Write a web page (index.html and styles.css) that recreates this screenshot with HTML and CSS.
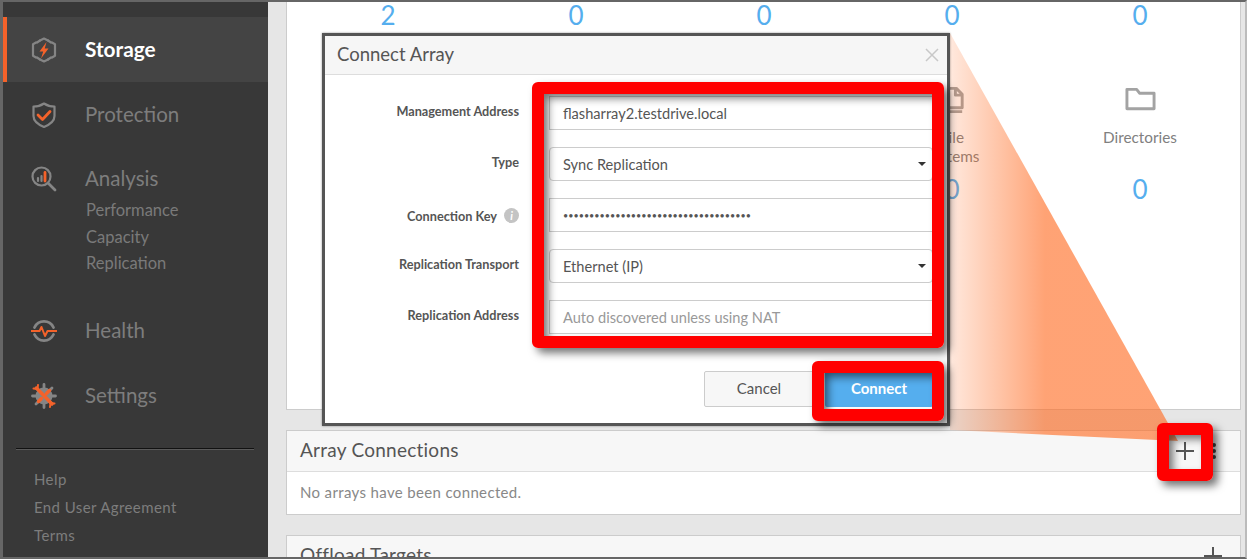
FILE: index.html
```html
<!DOCTYPE html>
<html lang="en">
<head>
<meta charset="utf-8">
<title>Connect Array</title>
<link rel="stylesheet" href="styles.css">
</head>
<body>
<div class="page">
  <div class="frame">
    <aside class="sidebar">
      <nav class="nav">
        <div class="nav-item active">
          <svg class="nav-icon" viewBox="0 0 26 26"><path class="g" d="M9 3.500L13 1.500l4 2M21 5.500l3 1.800v11.400l-3 1.800M17 22.500l-4 2-4-2M5 20.500l-3-1.800V7.300l3-1.800"/><path class="g" d="M6 5.500L9 3.500M20 5.500L17 3.500M6 20.500L9 22.500M20 20.500L17 22.500"/><path class="of" d="M15.500 5L8.500 14.500h3.700L10 21.500l7.500-10h-3.800z"/></svg>
          <span>Storage</span>
        </div>
        <div class="nav-item">
          <svg class="nav-icon" viewBox="0 0 26 26"><path class="g" d="M13 1.500c3 2 6.500 3 10.500 3V14c0 5-4.500 8.500-10.500 11C7 22.500 2.500 19 2.500 14V4.500c4 0 7.500-1 10.500-3z"/><path class="o wide" d="M7 13l4.500 4.500L19 9.500"/></svg>
          <span>Protection</span>
        </div>
        <div class="nav-group">
          <div class="nav-item nav-head">
            <svg class="nav-icon" viewBox="0 0 26 26"><circle class="g" cx="10.500" cy="10.500" r="9"/><path class="g heavy" d="M17.500 17.500l6.500 6.500"/><path class="g" d="M7 12v3M10.500 10v5"/><path class="o wide" d="M14 6.500V15"/></svg>
            <span>Analysis</span>
          </div>
          <a class="sub">Performance</a>
          <a class="sub">Capacity</a>
          <a class="sub">Replication</a>
        </div>
        <div class="nav-item">
          <svg class="nav-icon" viewBox="0 0 26 26"><path class="g heavy" d="M3.500 9.500a10.500 10.500 0 0 1 19 0M22.500 16.500a10.500 10.500 0 0 1-19 0"/><path class="o" d="M0.500 13h8l2-4 3.500 9 2.500-5h9"/></svg>
          <span>Health</span>
        </div>
        <div class="nav-item">
          <svg class="nav-icon" viewBox="0 0 26 26"><circle class="gear" cx="13" cy="13" r="8.500"/><path class="g heavy" d="M13 1.500v4M13 20.500v4M1.500 13h4M20.500 13h4M5 5l2.500 2.500M18.500 18.500L21 21M21 5l-2.500 2.500M7.500 18.500L5 21"/><path class="o wrench" d="M5.500 5l15.500 16M18.500 7.500l-3 3M10.500 15.500l-3 3"/><path class="o" d="M2.500 5.500l4 .5.500-4M23.500 20.500l-4-.5-.5 4"/></svg>
          <span>Settings</span>
        </div>
      </nav>
      <div class="divider"></div>
      <div class="links">
        <a>Help</a>
        <a>End User Agreement</a>
        <a>Terms</a>
      </div>
    </aside>
    <main class="main">
      <section class="card">
        <div class="stats">
          <div class="num">2</div><div class="num">0</div><div class="num">0</div><div class="num">0</div><div class="num">0</div>
        </div>
        <div class="stats details">
          <div class="cell"></div>
          <div class="cell"></div>
          <div class="cell"></div>
          <div class="cell">
            <svg class="stat-icon" viewBox="0 0 32 28"><path d="M9 2h11l6 6v14H9zM19 2v7h7M6 26h20"/></svg>
            <div class="label">File<br>Systems</div>
            <div class="num">0</div>
          </div>
          <div class="cell">
            <svg class="stat-icon" viewBox="0 0 32 28"><path d="M2 3h10l3 4h15v16H2z"/></svg>
            <div class="label">Directories</div>
            <div class="num">0</div>
          </div>
        </div>
      </section>
      <section class="panel">
        <header class="panel-head">
          <h2>Array Connections</h2>
          <div class="actions">
            <svg class="plus" viewBox="0 0 20 20"><path d="M10 1v18M1 10h18"/></svg>
            <span class="dots"><i></i><i></i><i></i></span>
          </div>
        </header>
        <p class="panel-body">No arrays have been connected.</p>
      </section>
      <section class="panel">
        <header class="panel-head">
          <h2>Offload Targets</h2>
          <div class="actions">
            <svg class="plus" viewBox="0 0 20 20"><path d="M10 1v18M1 10h18"/></svg>
          </div>
        </header>
      </section>
    </main>
  </div>

  <svg class="wedge" viewBox="0 0 1247 560">
    <defs>
      <linearGradient id="wedgeFill" gradientUnits="userSpaceOnUse" x1="950" y1="0" x2="1045" y2="0">
        <stop offset="0" stop-color="#ff6a20" stop-opacity="0.15"/>
        <stop offset="1" stop-color="#ff6a20" stop-opacity="0.62"/>
      </linearGradient>
    </defs>
    <polygon points="950,33 1178,441 950,430" fill="url(#wedgeFill)"/>
  </svg>

  <div class="modal">
    <header class="modal-head">
      <h3>Connect Array</h3>
      <svg class="close" viewBox="0 0 14 14"><path d="M1 1l12 12M13 1L1 13"/></svg>
    </header>
    <div class="form">
      <div class="row">
        <div class="row-label">Management Address</div>
        <div class="field square">flasharray2.testdrive.local</div>
      </div>
      <div class="row">
        <div class="row-label">Type</div>
        <div class="field select">Sync Replication<i class="caret"></i></div>
      </div>
      <div class="row">
        <div class="row-label key">Connection Key <span class="info">i</span></div>
        <div class="field square dots-text">••••••••••••••••••••••••••••••••••••</div>
      </div>
      <div class="row">
        <div class="row-label">Replication Transport</div>
        <div class="field select">Ethernet (IP)<i class="caret"></i></div>
      </div>
      <div class="row">
        <div class="row-label">Replication Address</div>
        <div class="field square placeholder">Auto discovered unless using NAT</div>
      </div>
    </div>
    <footer class="modal-foot">
      <button class="btn cancel">Cancel</button>
      <button class="btn connect">Connect</button>
    </footer>
  </div>

  <div class="mark mark-form"></div>
  <div class="mark mark-connect"></div>
  <div class="mark mark-plus"></div>
</div>
</body>
</html>
```

FILE: styles.css
```css
* { box-sizing: border-box; }
html, body { margin: 0; padding: 0; background: #fff; overflow: hidden; }
body { font-family: "Lato", "Open Sans", sans-serif; color: #555; }
.page { position: relative; width: 1247px; height: 560px; overflow: hidden; }
.frame {
  display: flex;
  width: 1247px;
  height: 559px;
  border-style: solid;
  border-color: #666;
  border-width: 2px 2px 2px 3px;
  border-right-color: #bbb;
  overflow: hidden;
}

/* sidebar */
.sidebar { width: 265px; flex: none; background: #383838; padding-top: 15px; color: #7d7d7d; }
.nav { display: flex; flex-direction: column; }
.nav-item { display: flex; align-items: center; gap: 28px; height: 65px; padding-left: 28px; font-size: 20.500px; }
.nav-item span { margin-top: -2px; }
.nav-item.active { background: #444; border-left: 4px solid #f4622a; padding-left: 24px; color: #fff; font-weight: 700; font-size: 20.800px; }
.nav-head { height: 34px; margin-top: 15px; }
.nav-group { display: flex; flex-direction: column; margin-bottom: 23px; }
.nav-icon { width: 26px; height: 26px; flex: none; fill: none; }
.nav-icon .g { stroke: #858585; stroke-width: 2.200; fill: none; stroke-linecap: round; stroke-linejoin: round; }
.nav-icon .heavy { stroke-width: 2.800; }
.nav-icon .o { stroke: #f4622a; stroke-width: 2; fill: none; stroke-linecap: round; stroke-linejoin: round; }
.nav-icon .wide { stroke-width: 2.800; }
.nav-icon .wrench { stroke-width: 3.400; }
.nav-icon .of { fill: #f4622a; }
.nav-icon .gear { fill: #858585; }
.sub { display: block; height: 26.500px; line-height: 29.500px; padding-left: 83px; font-size: 16.500px; color: #7a7a7a; }
.divider { margin: 19px 14px 0 13px; height: 2px; background: #111; border-bottom: 1px solid #5a5a5a; }
.links { display: flex; flex-direction: column; padding: 15px 0 0 31px; font-size: 15px; letter-spacing: .4px; color: #7d7d7d; }
.links a { line-height: 28.300px; }

/* main */
.main { flex: 1; min-width: 0; background: #e6e6e6; padding: 0 4px 0 18px; }
.card { height: 408px; background: #fff; border: 1px solid #ccc; border-top: 0; padding: 0 0 0 7px; }
.stats { display: grid; grid-template-columns: repeat(5, 188px); }
.details { margin-top: 58px; }
.num { text-align: center; font-size: 26px; line-height: 26px; color: #55aeee; }
.cell { display: flex; flex-direction: column; align-items: center; }
.stat-icon { width: 31px; height: 28px; fill: none; stroke: #a3a3a3; stroke-width: 3; stroke-linejoin: round; }
.label { height: 38px; margin: 14px 0 10px; text-align: center; font-size: 15.300px; line-height: 19px; color: #808080; }
.panel { margin-top: 20px; background: #fff; border: 1px solid #ccc; }
.panel-head { display: flex; align-items: center; justify-content: space-between; height: 41px; padding: 0 17px 0 13px; background: #f7f7f7; border-bottom: 1px solid #ddd; }
.panel-head h2 { margin: -4px 0 0; font-size: 19px; letter-spacing: .25px; font-weight: 400; color: #555; }
.panel-body { margin: 0; height: 42px; padding-left: 13px; line-height: 40px; font-size: 15px; letter-spacing: .35px; color: #888; }
.actions { display: flex; align-items: center; gap: 17px; margin-right: 7px; }
.panel + .panel .actions { margin-right: 0; }
.plus { width: 20px; height: 20px; fill: none; stroke: #555; stroke-width: 2; }
.dots { display: flex; flex-direction: column; gap: 2px; }
.dots i { width: 4px; height: 4px; border-radius: 50%; background: #444; }

/* overlays */
.wedge { position: absolute; left: 0; top: 0; width: 1247px; height: 560px; }
.modal { position: absolute; left: 322px; top: 33px; width: 628px; height: 393px; background: #fff; border: 3px solid #555; box-shadow: 0 0 2px rgba(0,0,0,.4); }
.modal-head { display: flex; align-items: center; justify-content: space-between; height: 39px; padding: 0 8px 0 12px; background: #f6f6f6; border-bottom: 1px solid #ddd; }
.modal-head h3 { margin: -2px 0 0; font-size: 18.500px; font-weight: 400; color: #555; }
.close { width: 14px; height: 14px; fill: none; stroke: #c8c8c8; stroke-width: 1.500; }
.form { display: flex; flex-direction: column; gap: 17px; padding: 21px 14px 0 0; }
.row { display: flex; gap: 30px; }
.row-label { width: 194px; flex: none; padding-top: 7px; text-align: right; font-size: 12.700px; line-height: 16px; font-weight: 700; color: #555; }
.row-label.key { padding: 10px 22px 0 0; position: relative; white-space: nowrap; }
.info { position: absolute; right: 0; top: 10px; display: flex; align-items: center; justify-content: center; width: 15px; height: 15px; border-radius: 50%; background: #c4c4c4; color: #fff; font-size: 11px; font-style: italic; line-height: 15px; }
.field { position: relative; width: 384px; height: 34px; padding-left: 13px; border: 1px solid #ccc; background: #fff; font-size: 14.600px; line-height: 33px; color: #555; }
.square { border-radius: 0; }
.select { border-radius: 4px; }
.placeholder { color: #999; }
.dots-text { font-size: 9px; color: #555; }
.caret { position: absolute; right: 6px; top: 14px; width: 0; height: 0; border-left: 4px solid transparent; border-right: 4px solid transparent; border-top: 4px solid #333; }
.modal-foot { display: flex; justify-content: flex-end; gap: 11px; padding: 37px 14px 0 0; }
.btn { height: 36px; padding: 0 0 2px; border-radius: 2px; font-family: inherit; font-size: 15px; }
.cancel { width: 110px; background: #f7f7f7; border: 1px solid #ccc; color: #555; }
.connect { width: 108px; background: #55aeee; border: 0; color: #fff; font-weight: 700; }
.mark { position: absolute; border: 12px solid #f00; border-radius: 6px; box-shadow: 5px 5px 8px rgba(0,0,0,.55), inset 5px 5px 8px -1px rgba(0,0,0,.55); }
.mark-form { left: 532px; top: 82px; width: 412px; height: 266px; }
.mark-connect { left: 812px; top: 361px; width: 132px; height: 60px; }
.mark-plus { left: 1157px; top: 423px; width: 56px; height: 58px; }
```
